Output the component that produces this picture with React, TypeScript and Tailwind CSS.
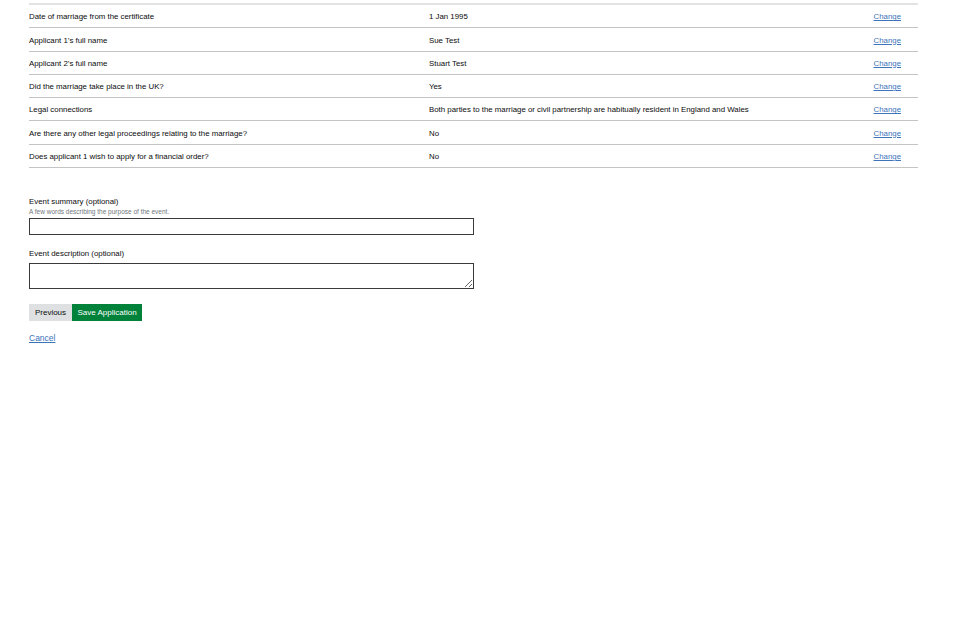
import React from "react";

const rows: [string, string][] = [
  ["Date of marriage from the certificate", "1 Jan 1995"],
  ["Applicant 1’s full name", "Sue Test"],
  ["Applicant 2’s full name", "Stuart Test"],
  ["Did the marriage take place in the UK?", "Yes"],
  ["Legal connections", "Both parties to the marriage or civil partnership are habitually resident in England and Wales"],
  ["Are there any other legal proceedings relating to the marriage?", "No"],
  ["Does applicant 1 wish to apply for a financial order?", "No"],
];

export default function App() {
  return (
    <div
      className="w-[960px] h-[640px] bg-white text-[#0b0c0c] overflow-hidden"
      style={{ fontFamily: '"Liberation Sans", Arial, sans-serif' }}
    >
      <div className="ml-[29px] w-[889px] pt-[3px]">
        <div className="h-[2px] bg-[#e3e3e3]" />
        {rows.map(([k, v], i) => (
          <div
            key={i}
            className="h-[23.3px] pt-[2px] border-b border-[#c4c4c4] flex items-center text-[7.85px] leading-none box-border"
          >
            <div className="w-[400px] shrink-0">{k}</div>
            <div className="flex-1">{v}</div>
            <a href="#" className="mr-[17px] text-[#3d74ba] underline text-[7.85px]">
              Change
            </a>
          </div>
        ))}
        <div className="mt-[29px]">
          <div className="text-[7.85px] leading-[10px]">Event summary (optional)</div>
          <div className="text-[6.5px] leading-[8px] text-[#6f777b] mt-[1px]">
            A few words describing the purpose of the event.
          </div>
          <input
            type="text"
            className="mt-[2px] block w-[445px] h-[17px] border border-[#3a3a3a] bg-white outline-none"
          />
          <div className="text-[7.85px] leading-[10px] mt-[14px]">Event description (optional)</div>
          <textarea
            className="mt-[4px] block w-[445px] h-[26px] border border-[#3a3a3a] bg-white outline-none resize-y"
          />
          <div className="flex mt-[15px]">
            <button className="h-[17px] w-[43px] bg-[#dee0e2] text-[8px] text-[#0b0c0c]">Previous</button>
            <button className="h-[17px] w-[70px] bg-[#00823b] text-[8px] text-white">Save Application</button>
          </div>
          <a href="#" className="inline-block mt-[11px] text-[8.5px] text-[#3d74ba] underline">
            Cancel
          </a>
        </div>
      </div>
    </div>
  );
}
